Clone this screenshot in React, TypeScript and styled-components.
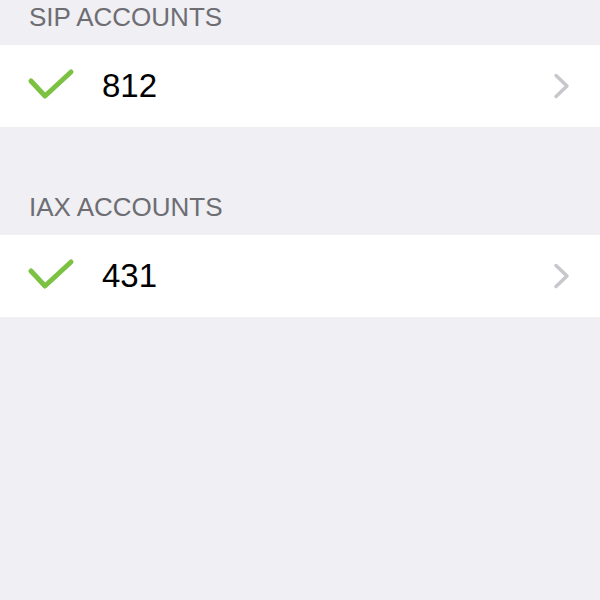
import React from "react";
import styled, { createGlobalStyle } from "styled-components";

const Global = createGlobalStyle`
  html, body { margin: 0; padding: 0; background: #efeff4; }
  body { font-family: "Liberation Sans", Arial, sans-serif; }
`;

const Page = styled.div`
  width: 600px;
  min-height: 600px;
  background: #efeff4;
  display: flex;
  flex-direction: column;
`;

const SectionHeader = styled.div<{ $height: number }>`
  height: ${(p) => p.$height}px;
  display: flex;
  align-items: flex-end;
  padding: 0 0 13px 29px;
  box-sizing: border-box;
  font-size: 26px;
  line-height: 30px;
  color: #6d6d72;
  text-transform: uppercase;
`;

const Row = styled.div`
  height: 82px;
  background: #ffffff;
  display: flex;
  align-items: center;
  padding: 0 28px 0 26px;
  box-sizing: border-box;
`;

const CheckBox = styled.div`
  width: 76px;
  display: flex;
  align-items: center;
`;

const Label = styled.div`
  flex: 1;
  font-size: 33px;
  color: #000;
  line-height: 40px;
`;

const Check = () => (
  <svg width="50" height="36" viewBox="0 0 50 36">
    <polyline
      points="5,13 19,28 45,4"
      fill="none"
      stroke="#7cc242"
      strokeWidth="5"
      strokeLinecap="round"
      strokeLinejoin="round"
    />
  </svg>
);

const Chevron = () => (
  <svg width="20" height="26" viewBox="0 0 20 26">
    <polyline
      points="4,2.5 15,13 4,23.5"
      fill="none"
      stroke="#c7c7cc"
      strokeWidth="3.5"
      strokeLinecap="round"
      strokeLinejoin="round"
    />
  </svg>
);

const Account = ({ name }: { name: string }) => (
  <Row>
    <CheckBox>
      <Check />
    </CheckBox>
    <Label>{name}</Label>
    <Chevron />
  </Row>
);

export default function App() {
  return (
    <Page>
      <Global />
      <SectionHeader $height={45}>SIP Accounts</SectionHeader>
      <Account name="812" />
      <SectionHeader $height={108}>IAX Accounts</SectionHeader>
      <Account name="431" />
    </Page>
  );
}
